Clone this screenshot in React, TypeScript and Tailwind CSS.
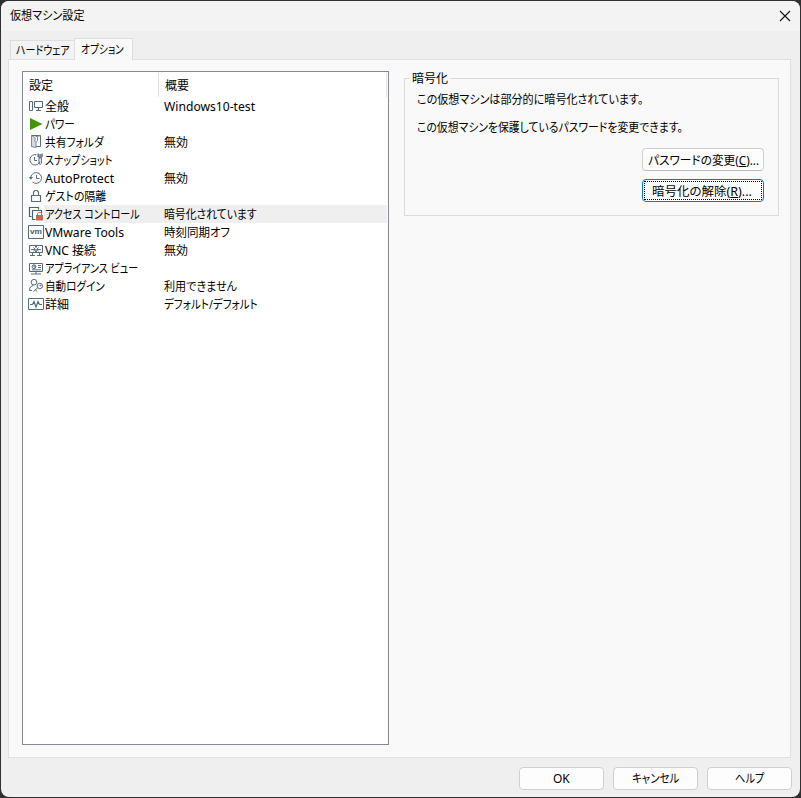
import React, { useLayoutEffect, useRef, useState } from 'react';

// Squeezes a label to the proportional width of the classic dialog font
const Label: React.FC<{ w: number; children: React.ReactNode }> = ({ w, children }) => {
  const ref = useRef<HTMLSpanElement>(null);
  const [scale, setScale] = useState(1);

  useLayoutEffect(() => {
    if (ref.current) setScale(w / ref.current.offsetWidth);
  }, [w]);

  return (
    <span className="inline-block shrink-0 text-left" style={{ width: w }}>
      <span ref={ref} className="inline-block origin-left whitespace-pre" style={{ transform: `scaleX(${scale})` }}>
        {children}
      </span>
    </span>
  );
};

const Icon: React.FC<{ children: React.ReactNode }> = ({ children }) => (
  <svg width="16" height="16" viewBox="0 0 16 16" fill="none" stroke="#566b78" strokeWidth="1" className="shrink-0">
    {children}
  </svg>
);

const icons = {
  general: (
    <Icon>
      <path d="M1.5 3.5h3v9h-3zM6.5 3.5h8v6h-8zM8 12.5h5M10.5 10v2" />
    </Icon>
  ),
  power: (
    <Icon>
      <path d="M2 2l12.5 6L2 14z" fill="#43940c" stroke="none" />
    </Icon>
  ),
  folder: (
    <Icon>
      <path d="M3.5 1.5h9v11h-9z" />
      <path d="M3.5 1.5l3.5 2v4l1 1v5l-4.5-1z" fill="#d6dde1" stroke="#7c8c96" />
      <path d="M7.5 2.5h2v4l-1.5 2M9.5 2l3 0" stroke="#7c8c96" />
    </Icon>
  ),
  snapshot: (
    <Icon>
      <path d="M8.5 2.8A5.2 5.2 0 1 0 12 9.5M6.5 5v3.5H9" />
      <path d="M10.2 1.5v3l1.9 1.4L14 4.500v-3M12.1 2v2.500" strokeWidth="1.4" />
      <path d="M11 6v5.500l1.200 1 1.200-1V6" />
    </Icon>
  ),
  protect: (
    <Icon>
      <path d="M2.800 7A5.400 5.400 0 1 1 4.500 12M8.500 5v3.500h3" />
      <path d="M.8 7h4.200L2.900 9.700z" fill="#566b78" stroke="none" />
    </Icon>
  ),
  lock: (
    <Icon>
      <path d="M3.500 7.500h9v6h-9zM5.500 7V4l1.300-1.500h2.400L10.500 4v3" strokeWidth="1.200" />
    </Icon>
  ),
  access: (
    <Icon>
      <path d="M3.500 10.500h-2v-9h9v2M7.500 13.500h-3v-9h9V7" stroke="#3f6479" strokeWidth="1.200" />
      <path d="M8 9h7v5.500H8z" fill="#c5694b" stroke="none" />
      <path d="M9.500 9V7.300l1-.8h2l1 .8V9" stroke="#c5694b" />
    </Icon>
  ),
  tools: (
    <Icon>
      <path d="M.5 1.500h15v13H.5z" fill="#fff" />
      <text x="2" y="10" fontSize="8" fontWeight="700" fontFamily="Liberation Sans, sans-serif" fill="#465c6a" stroke="none" textLength="12" lengthAdjust="spacingAndGlyphs">vm</text>
    </Icon>
  ),
  vnc: (
    <Icon>
      <path d="M7 3.500H1.500v7H7M9 3.500h5.500v7H9M7.500 3v2.500M8.500 3v2.500M7.500 8.500V11M8.500 8.500V11M4.500 11v2.500M11.500 11v2.500M2 13.500h5M9 13.500h5" />
      <path d="M3 7.500h4M5.500 5.500l2 2-2 1.500M13 7.500H9M10.500 5.500l-2 2 2 1.500" />
    </Icon>
  ),
  appliance: (
    <Icon>
      <path d="M1.500 3.500h13v8h-13zM8 11.500v2.500M3 14h10M10 5.500h3M10 7.500h3M4 9.800h9" />
      <circle cx="6" cy="6.700" r="1.900" />
      <path d="M6 5v2h2" />
    </Icon>
  ),
  login: (
    <Icon>
      <circle cx="6" cy="4.200" r="2.800" />
      <path d="M1.500 12.500c0-3 1.500-4.500 3.700-5M1.500 12.500H4" />
      <circle cx="11.800" cy="8" r="2.700" />
      <path d="M9.800 9.800L5.500 13.500M7.500 11.800l1.300 1.500" />
      <circle cx="12.300" cy="7.500" r=".5" />
    </Icon>
  ),
  advanced: (
    <Icon>
      <path d="M.5 2.500h15v11H.5z" />
      <path d="M2 8.500h2.500L6 5.500l2 5.500 2-5.500 1.500 3H14" strokeWidth="1.200" />
    </Icon>
  ),
};

const rows = [
  { icon: icons.general, name: '全般', w: 24, value: 'Windows10-test', vw: 91 },
  { icon: icons.power, name: 'パワー', w: 30 },
  { icon: icons.folder, name: '共有フォルダ', w: 59, value: '無効', vw: 24 },
  { icon: icons.snapshot, name: 'スナップショット', w: 67 },
  { icon: icons.protect, name: 'AutoProtect', w: 69, value: '無効', vw: 24 },
  { icon: icons.lock, name: 'ゲストの隔離', w: 61 },
  { icon: icons.access, name: 'アクセス コントロール', w: 95, value: '暗号化されています', vw: 93, selected: true },
  { icon: icons.tools, name: 'VMware Tools', w: 79, value: '時刻同期オフ', vw: 66 },
  { icon: icons.vnc, name: 'VNC 接続', w: 51, value: '無効', vw: 24 },
  { icon: icons.appliance, name: 'アプライアンス ビュー', w: 93 },
  { icon: icons.login, name: '自動ログイン', w: 60, value: '利用できません', vw: 73 },
  { icon: icons.advanced, name: '詳細', w: 24, value: 'デフォルト/デフォルト', vw: 94 },
];

const Button: React.FC<{ className: string; children: React.ReactNode }> = ({ className, children }) => (
  <button className={`flex h-[23px] items-center justify-center rounded-[4px] border bg-[#fdfdfd] ${className}`}>
    {children}
  </button>
);

const App: React.FC = () => {
  return (
    <div className="h-[798px] w-[801px] bg-[#303032] pt-px pl-px font-['Noto_Sans','Noto_Sans_CJK_JP',sans-serif] text-[12px] leading-[18px] text-black [font-feature-settings:'palt']">
      <div className="flex h-[796px] w-[799px] flex-col overflow-hidden rounded-[8px] bg-[#efefef]">
        <header className="flex h-[30px] shrink-0 items-center justify-between bg-[#f3f3f3] pr-[9px] pl-[9px]">
          <Label w={75}>仮想マシン設定</Label>
          <svg width="12" height="12" viewBox="0 0 12 12" stroke="#1a1a1a" strokeWidth="1.2" className="-mt-px">
            <path d="M1 1l10 10M11 1L1 11" />
          </svg>
        </header>

        <main className="flex flex-col pt-[7px] pl-[7px]">
          {/* Tabs */}
          <div className="z-10 -mb-px flex h-[22px] items-end pl-[2px]">
            <div className="mb-px flex h-[19px] w-[64px] items-center justify-center border border-r-0 border-b-0 border-[#dedede] bg-[#f3f3f3] pt-[2px]">
              <Label w={54}>ハードウェア</Label>
            </div>
            <div className="flex h-[22px] w-[59px] items-center justify-center border border-b-0 border-[#dedede] bg-[#f9f9f9] pr-[2px]">
              <Label w={43}>オプション</Label>
            </div>
          </div>

          <div className="flex h-[699px] w-[783px] border border-[#e0e0e0] bg-[#f9f9f9] pt-[11px] pl-[13px]">
            <div className="h-[674px] w-[367px] shrink-0 border border-[#828790] bg-white">
              <div className="flex h-[25px] pt-px">
                <div className="flex w-[136px] items-center border-r border-[#e0e0e0] pt-[2px] pl-[6px]">
                  <Label w={24}>設定</Label>
                </div>
                <div className="flex w-[228px] items-center border-r border-[#e0e0e0] pt-[2px] pl-[6px]">
                  <Label w={24}>概要</Label>
                </div>
              </div>
              {rows.map((row) => (
                <div key={row.name} className="flex h-[18px] items-center pl-[5px]">
                  {row.icon}
                  <div className={`flex h-[18px] w-[343px] items-center pt-[2px] pl-px ${row.selected ? 'bg-[#efefef]' : ''}`}>
                    <div className="flex w-[119px]">
                      <Label w={row.w}>{row.name}</Label>
                    </div>
                    {row.value && <Label w={row.vw}>{row.value}</Label>}
                  </div>
                </div>
              ))}
            </div>

            <fieldset className="mt-[-2px] ml-[15px] h-[147px] w-[375px] border border-[#dcdcdc]">
              <legend className="ml-[5px] h-[18px] px-[2px] pt-px">
                <Label w={36}>暗号化</Label>
              </legend>
              <div className="flex flex-col pr-[14px] pl-[12px]">
                <div className="mt-[4px] flex">
                  <Label w={226}>この仮想マシンは部分的に暗号化されています。</Label>
                </div>
                <div className="mt-[10px] flex">
                  <Label w={266}>この仮想マシンを保護しているパスワードを変更できます。</Label>
                </div>
                <Button className="mt-[11px] w-[122px] self-end border-[#d0d0d0] border-b-[#bcbcbc] pt-[2px]">
                  <Label w={111}>パスワードの変更(<u>C</u>)...</Label>
                </Button>
                <Button className="mt-[8px] w-[122px] self-end border-[#0078d4] p-px">
                  <span className="flex h-[19px] w-full items-center justify-center border border-dotted border-black pt-[2px] pr-[2px]">
                    <Label w={100}>暗号化の解除(<u>R</u>)...</Label>
                  </span>
                </Button>
              </div>
            </fieldset>
          </div>
        </main>

        <footer className="flex justify-end gap-[9px] pt-[9px] pr-[8px]">
          <Button className="w-[85px] border-[#d0d0d0]">
            <Label w={17}>OK</Label>
          </Button>
          <Button className="w-[85px] border-[#d0d0d0]">
            <Label w={47}>キャンセル</Label>
          </Button>
          <Button className="w-[85px] border-[#d0d0d0]">
            <Label w={29}>ヘルプ</Label>
          </Button>
        </footer>
      </div>
    </div>
  );
};

export default App;
